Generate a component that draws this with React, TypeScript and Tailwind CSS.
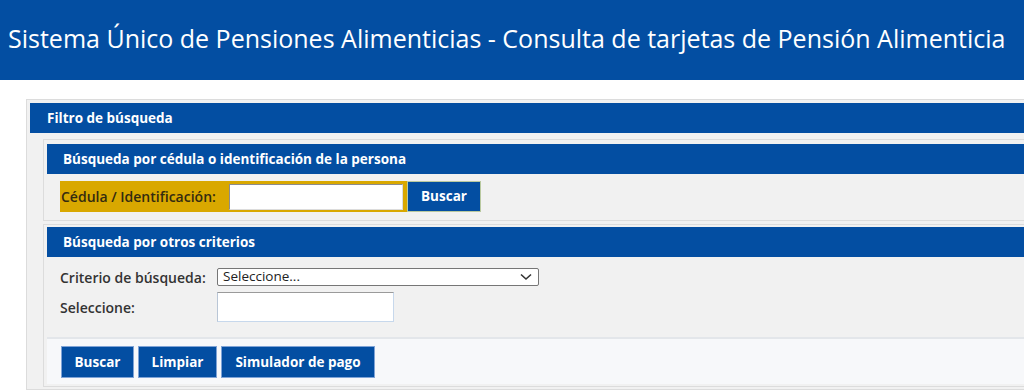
import React from "react";

const BLUE = "bg-[#034ea2]";

function Btn({ children, w }: { children: React.ReactNode; w: string }) {
  return (
    <button
      className={`${w} h-[32px] ${BLUE} border border-[#7fa3d6] text-white font-bold text-[13.5px] flex items-center justify-center`}
    >
      {children}
    </button>
  );
}

export default function App() {
  return (
    <div
      className="w-[1024px] h-[392px] overflow-hidden bg-white"
      style={{ fontFamily: '"Open Sans", "Noto Sans", sans-serif' }}
    >
      <div className={`h-[80px] ${BLUE} flex items-center pl-[8px] pb-[4px]`}>
        <h1 className="text-white text-[25px] leading-none tracking-[0px]">
          Sistema Único de Pensiones Alimenticias - Consulta de tarjetas de Pensión Alimenticia
        </h1>
      </div>

      <div className="ml-[26px] mt-[19px] w-[1010px] border border-[#dcdcdc] bg-[#f1f1f1] p-[3px] pb-[2px]">
        <div className={`h-[30px] ${BLUE} flex items-center pl-[17px] text-white font-bold text-[13.5px]`}>
          Filtro de búsqueda
        </div>

        <div className="mt-[6px] ml-[13px] border border-[#dcdcdc] px-[3px] pt-[4px] pb-[8px]">
          <div className={`h-[30px] ${BLUE} flex items-center pl-[16px] text-white font-bold text-[13.5px]`}>
            Búsqueda por cédula o identificación de la persona
          </div>
          <div className="mt-[7px] ml-[13px] flex h-[31px]">
            <div className="bg-[#d9a800] flex items-center pl-[1px] pr-[4px]">
              <span className="text-[#332b10] font-semibold text-[14px] w-[168px]">
                Cédula / Identificación:
              </span>
              <input
                className="w-[174px] h-[26px] bg-white border border-t-[#8c8c8c] border-l-[#8c8c8c] border-b-[#dcdcdc] border-r-[#dcdcdc] outline-none"
                type="text"
              />
            </div>
            <button
              className={`w-[74px] h-[31px] ${BLUE} border border-[#b9c9a0] text-white font-bold text-[13.5px] flex items-center justify-center`}
            >
              Buscar
            </button>
          </div>
        </div>

        <div className="mt-[3px] ml-[13px] border border-[#dcdcdc] px-[3px] pt-[2px] pb-[2px]">
          <div className={`h-[30px] ${BLUE} flex items-center pl-[16px] text-white font-bold text-[13.5px]`}>
            Búsqueda por otros criterios
          </div>
          <div className="pt-[11px] pb-[15px] pl-[13px]">
            <div className="flex items-center h-[18px]">
              <span className="text-[#333] font-semibold text-[14px] w-[157px]">Criterio de búsqueda:</span>
              <div className="w-[322px] h-[18px] bg-white border border-[#767676] rounded-[2px] flex items-center justify-between pl-[5px] pr-[6px]">
                <span className="text-[#222] text-[13.5px] leading-none">Seleccione...</span>
                <svg width="12" height="8" viewBox="0 0 12 8" fill="none">
                  <path d="M1 1.5 L6 6 L11 1.5" stroke="#333" strokeWidth="1.6" />
                </svg>
              </div>
            </div>
            <div className="flex items-center mt-[6px] h-[30px]">
              <span className="text-[#333] font-semibold text-[14px] w-[157px]">Seleccione:</span>
              <input
                className="w-[177px] h-[30px] bg-white border border-t-[#9a9a9a] border-l-[#b9c6d6] border-b-[#c7d8ec] border-r-[#c7d8ec] outline-none"
                type="text"
              />
            </div>
          </div>
          <div className="border-t-2 border-[#e3e6ea] bg-[#f7f8fa] pt-[7px] pb-[6px] pl-[14px] flex gap-[4px]">
            <Btn w="w-[73px]">Buscar</Btn>
            <Btn w="w-[79px]">Limpiar</Btn>
            <Btn w="w-[154px]">Simulador de pago</Btn>
          </div>
        </div>
      </div>
    </div>
  );
}
